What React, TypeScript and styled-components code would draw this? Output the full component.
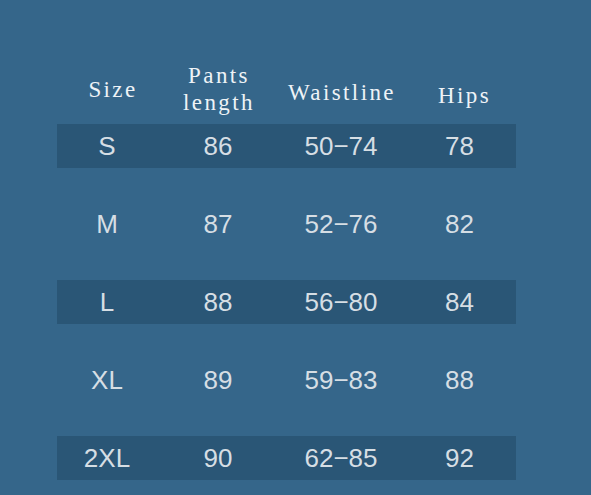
import React from 'react';
import styled, { createGlobalStyle } from 'styled-components';

const GlobalStyle = createGlobalStyle`
  html, body {
    margin: 0;
    padding: 0;
    background: #35668a;
  }
`;

const Page = styled.div`
  width: 591px;
  height: 495px;
  background: #35668a;
  padding: 60px 0 0 57px;
  box-sizing: border-box;
  overflow: hidden;
`;

const Table = styled.div`
  width: 459px;
  display: flex;
  flex-direction: column;
`;

const columns = '100px 122px 124px 113px';

const HeaderRow = styled.div`
  display: grid;
  grid-template-columns: ${columns};
  height: 58px;
  align-items: center;
  margin-bottom: 6px;
`;

const HeaderCell = styled.div<{ drop?: number; shift?: number }>`
  text-align: center;
  font-family: 'Liberation Serif', 'Times New Roman', serif;
  font-size: 23px;
  letter-spacing: 2.4px;
  line-height: 27px;
  color: #eef3f7;
  padding-top: ${({ drop }) => (drop || 0) * 2}px;
  padding-left: ${({ shift }) => (shift || 0) * 2}px;
`;

const Body = styled.div`
  display: flex;
  flex-direction: column;
  gap: 34px;
`;

const Row = styled.div<{ shaded: boolean }>`
  display: grid;
  grid-template-columns: ${columns};
  height: 44px;
  align-items: center;
  background: ${({ shaded }) => (shaded ? '#2a5676' : 'transparent')};
`;

const Cell = styled.div`
  text-align: center;
  font-family: 'Liberation Sans', Arial, sans-serif;
  font-size: 26px;
  color: #d6dee4;
`;

const rows = [
  ['S', '86', '50−74', '78'],
  ['M', '87', '52−76', '82'],
  ['L', '88', '56−80', '84'],
  ['XL', '89', '59−83', '88'],
  ['2XL', '90', '62−85', '92'],
];

const App: React.FC = () => (
  <Page>
    <GlobalStyle />
    <Table>
      <HeaderRow>
        <HeaderCell shift={6}>Size</HeaderCell>
        <HeaderCell shift={1}>
          Pants
          <br />
          length
        </HeaderCell>
        <HeaderCell drop={3} shift={1}>
          Waistline
        </HeaderCell>
        <HeaderCell drop={6} shift={5}>
          Hips
        </HeaderCell>
      </HeaderRow>
      <Body>
        {rows.map((r, i) => (
          <Row key={r[0]} shaded={i % 2 === 0}>
            {r.map((v) => (
              <Cell key={v}>{v}</Cell>
            ))}
          </Row>
        ))}
      </Body>
    </Table>
  </Page>
);

export default App;
